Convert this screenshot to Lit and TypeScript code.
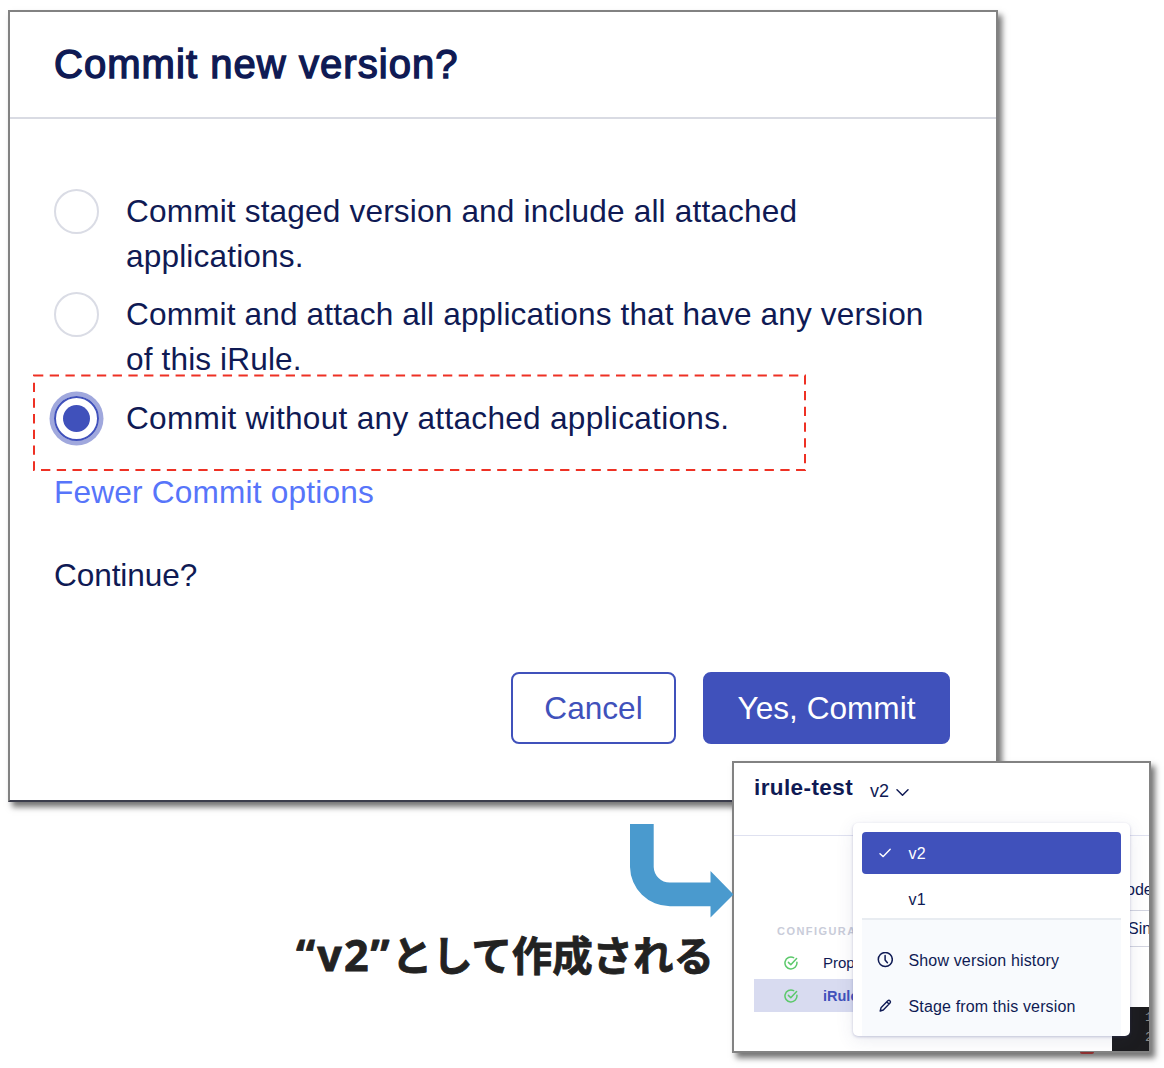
import { LitElement, html, css, svg } from "lit";
import { customElement, property } from "lit/decorators.js";

const checkCircle = html`<svg class="ok" viewBox="0 0 14 14" width="14" height="14" fill="none" stroke="#5cc96b" stroke-width="1.5" stroke-linecap="round" stroke-linejoin="round">
  <path d="M12.9 6.2 A6 6 0 1 1 9.6 1.6"/><path d="M4.4 6.4 L6.8 8.8 L12.6 2.6"/></svg>`;

@customElement("commit-dialog")
class CommitDialog extends LitElement {
  @property({ attribute: false }) options = [
    { lines: ["Commit staged version and include all attached", "applications."], on: false, tone: "" },
    { lines: ["Commit and attach all applications that have any version", "of this iRule."], on: false, tone: "tight" },
    { lines: ["Commit without any attached applications."], on: true, tone: "wide" },
  ];

  static styles = css`
    :host {
      display: flex; flex-direction: column; box-sizing: border-box;
      background: #fff; border: 2px solid #828282; border-bottom-color: #3b3d4c;
      box-shadow: 4px 5px 6px rgba(0, 0, 0, 0.55);
      font: 31.6px/45px "Liberation Sans", Arial, sans-serif; letter-spacing: 0.16px; color: #0f1a54;
    }
    .head { height: 105px; box-sizing: content-box; border-bottom: 2px solid #d9dbe3; padding-left: 44px; display: flex; align-items: center; }
    .title { margin: 0; font-size: 40px; font-weight: 400; letter-spacing: 1.05px; line-height: 48px; -webkit-text-stroke: 1.4px #0f1a54; white-space: nowrap; padding-bottom: 1px; }
    .body { padding: 69.5px 44px 0; display: flex; flex-direction: column; align-items: flex-start; white-space: nowrap; }
    .opt { display: flex; gap: 27px; margin-bottom: 13.4px; }
    .tight { letter-spacing: 0.13px; margin-bottom: 13.8px; }
    .wide { letter-spacing: 0.28px; margin-bottom: 13px; }
    .radio { width: 45px; height: 45px; box-sizing: border-box; border: 2px solid #dadce5; border-radius: 50%; flex: none; display: grid; place-items: center; }
    .radio.on { border-color: #4051bb; box-shadow: 0 0 0 4.5px #a0a8dd; }
    .dot { width: 27px; height: 27px; border-radius: 50%; background: #4051bb; }
    .line { display: block; }
    .link { color: #5775fa; margin-top: 16.5px; letter-spacing: 0.2px; }
    .ask { margin-top: 38px; letter-spacing: -0.1px; }
    .actions { display: flex; justify-content: flex-end; gap: 27px; margin-top: 74px; padding-right: 46px; }
    .btn { box-sizing: border-box; height: 72px; border: 2px solid #4051bb; border-radius: 8px; background: #fff; color: #4051bb; font: inherit; letter-spacing: 0; padding: 0; }
    .cancel { width: 165px; }
    .primary { width: 247px; background: #4051bb; color: #fff; }
  `;

  render() {
    return html`
      <div class="head"><h1 class="title">Commit new version?</h1></div>
      <div class="body">
        ${this.options.map((o) => html`
          <div class="opt ${o.tone}">
            <span class="radio ${o.on ? "on" : ""}">${o.on ? html`<span class="dot"></span>` : ""}</span>
            <span>${o.lines.map((l) => html`<span class="line">${l}</span>`)}</span>
          </div>`)}
        <span class="link">Fewer Commit options</span>
        <span class="ask">Continue?</span>
      </div>
      <div class="actions">
        <button class="btn cancel">Cancel</button>
        <button class="btn primary">Yes, Commit</button>
      </div>`;
  }
}

@customElement("version-menu")
class VersionMenu extends LitElement {
  static styles = css`
    :host {
      display: flex; flex-direction: column; box-sizing: border-box; background: #fff; border-radius: 5px; padding: 9px 9px 0;
      box-shadow: 0 1px 3px rgba(60, 70, 140, 0.28), 0 4px 18px rgba(60, 70, 120, 0.1);
      font: 16px/20px "Liberation Sans", Arial, sans-serif; letter-spacing: 0.15px; color: #0f1a54; white-space: nowrap;
    }
    .item { display: flex; align-items: center; height: 46px; padding-left: 15px; }
    .item span.txt { padding-top: 2px; }
    .icon { width: 16px; height: 16px; margin-right: 15.5px; flex: none; }
    .item.sel { height: 42px; background: #4051bb; color: #fff; border-radius: 4px; }
    .item.old { height: 44px; padding-top: 7px; box-sizing: border-box; }
    .foot { border-top: 2px solid #e8ecf1; background: #f8fafd; padding-top: 17px; flex: 1; }
  `;
  render() {
    return html`
      <div class="item sel"><svg class="icon" viewBox="0 0 16 16" fill="none" stroke="#fff" stroke-width="1.4" stroke-linecap="round" stroke-linejoin="round"><path d="M3 8.8 L6.2 11.6 L13.2 4.2"/></svg><span class="txt">v2</span></div>
      <div class="item old"><span class="icon"></span>v1</div>
      <div class="foot">
        <div class="item"><svg class="icon" viewBox="0 0 16 16" fill="none" stroke="#0f1a54" stroke-width="1.5" stroke-linecap="round" stroke-linejoin="round"><circle cx="8.3" cy="7.5" r="7"/><path d="M8.1 3.4 V8 L10.4 10.7"/></svg><span class="txt">Show version history</span></div>
        <div class="item"><svg class="icon" viewBox="0 0 16 16" fill="none" stroke="#0f1a54" stroke-width="1.4" stroke-linejoin="round"><path d="M3.2 13 L4 9.8 L10.8 2.8 Q12 1.8 13.1 2.9 Q14 3.9 13 5 L6.3 12 Z M9.7 3.8 L12 6.1"/></svg><span class="txt">Stage from this version</span></div>
      </div>`;
  }
}

@customElement("irule-panel")
class IrulePanel extends LitElement {
  static styles = css`
    :host {
      display: block; position: relative; box-sizing: border-box; background: #fff; border: 2px solid #828282;
      box-shadow: 4px 5px 6px rgba(0, 0, 0, 0.55);
      font: 15px/20px "Liberation Sans", Arial, sans-serif; color: #0f1a54; white-space: nowrap;
    }
    .frame { height: 100%; overflow: hidden; position: relative; display: flex; flex-direction: column; }
    .head { height: 72px; flex: none; border-bottom: 1px solid #dfe1f0; display: flex; align-items: flex-start; padding-left: 20px; }
    .name { font-size: 22.5px; line-height: 26px; font-weight: 700; letter-spacing: 0.4px; padding-top: 12px; }
    .ver { font-size: 18px; line-height: 22px; padding: 17px 0 0 17px; }
    .chev { margin: 25px 0 0 7px; }
    .cols { display: flex; flex: 1; }
    .side { width: 340px; margin-left: 20px; padding-top: 85px; flex: none; }
    .cap { font-size: 11px; font-weight: 700; letter-spacing: 1.45px; color: #c9ccd9; padding-left: 23px; }
    .row { height: 33px; display: flex; align-items: center; padding-left: 30px; gap: 25px; }
    .row.first { margin-top: 5px; }
    .row.cur { background: #d8dbf0; color: #4051bb; font-weight: 700; font-size: 14.5px; }
    .main { flex: 1; display: flex; flex-direction: column; font-size: 16px; }
    .cell { box-sizing: border-box; border-bottom: 1.4px solid #d2d4e0; }
    .mode { height: 75px; padding: 44px 0 0 32px; }
    .kind { height: 36px; padding: 8px 0 0 34px; }
    .code { margin: 60px 0 0 18px; flex: 1; background: #1c1c1f; color: #8b8b8b; font: 13px/20px "Liberation Mono", monospace; padding: 1px 0 0 33px; }
    .n { display: block; }
    .menu { position: absolute; left: 119px; top: 60px; width: 277px; height: 213px; }
    .mark { position: absolute; left: 346px; top: 289px; width: 14px; height: 2px; border-radius: 0 0 8px 8px; background: #8e3030; }
  `;
  render() {
    return html`
      <div class="frame">
        <div class="head">
          <span class="name">irule-test</span><span class="ver">v2</span>
          <svg class="chev" width="13" height="9" viewBox="0 0 13 9" fill="none" stroke="#0f1a54" stroke-width="1.5" stroke-linecap="round" stroke-linejoin="round"><path d="M1 1.8 L6.5 7.2 L12 1.8"/></svg>
        </div>
        <div class="cols">
          <div class="side">
            <div class="cap">CONFIGURA</div>
            <div class="row first">${checkCircle}<span>Prop</span></div>
            <div class="row cur">${checkCircle}<span>iRule</span></div>
          </div>
          <div class="main">
            <div class="cell mode">ode</div>
            <div class="cell kind">Sin</div>
            <div class="code"><span class="n">1</span><span class="n">2</span></div>
          </div>
        </div>
        <version-menu class="menu"></version-menu>
      </div>
      <span class="mark"></span>`;
  }
}

@customElement("app-root")
class AppRoot extends LitElement {
  static styles = css`
    :host { display: block; position: relative; width: 1164px; height: 1068px; background: #fff; overflow: hidden; }
    .dialog { position: absolute; left: 8px; top: 10px; width: 990px; height: 792px; }
    .panel { position: absolute; left: 732px; top: 761px; width: 419px; height: 292px; }
    .dash { position: absolute; left: 30px; top: 370px; }
    .arrow { position: absolute; left: 630px; top: 824px; }
    .note { position: absolute; left: 296px; top: 927px; display: flex; align-items: baseline; white-space: nowrap; color: #222; font: 700 40.5px/54px "Noto Sans CJK JP", sans-serif; letter-spacing: -0.1px; -webkit-text-stroke: 0.8px #222; }
    .lat { font-family: "Noto Sans", sans-serif; font-size: 43px; letter-spacing: 2.1px; }
  `;
  render() {
    return html`
      <commit-dialog class="dialog"></commit-dialog>
      <svg class="dash" width="780" height="104" fill="none">${svg`<path d="M4 5.5 H775 V100 H4 Z" stroke="#ee3124" stroke-width="2" stroke-dasharray="9.3 6.43"/>`}</svg>
      <irule-panel class="panel"></irule-panel>
      <svg class="arrow" width="104" height="94"><path fill="#4a9ace" d="M0 0 H23.7 V43 A16 16 0 0 0 39.7 58.5 H80.5 V47 L103.5 70.5 L80.5 93.5 V82.3 H40 A40 40 0 0 1 0 43 Z"/></svg>
      <div class="note"><span class="lat">“v2”</span><span>として作成される</span></div>`;
  }
}
